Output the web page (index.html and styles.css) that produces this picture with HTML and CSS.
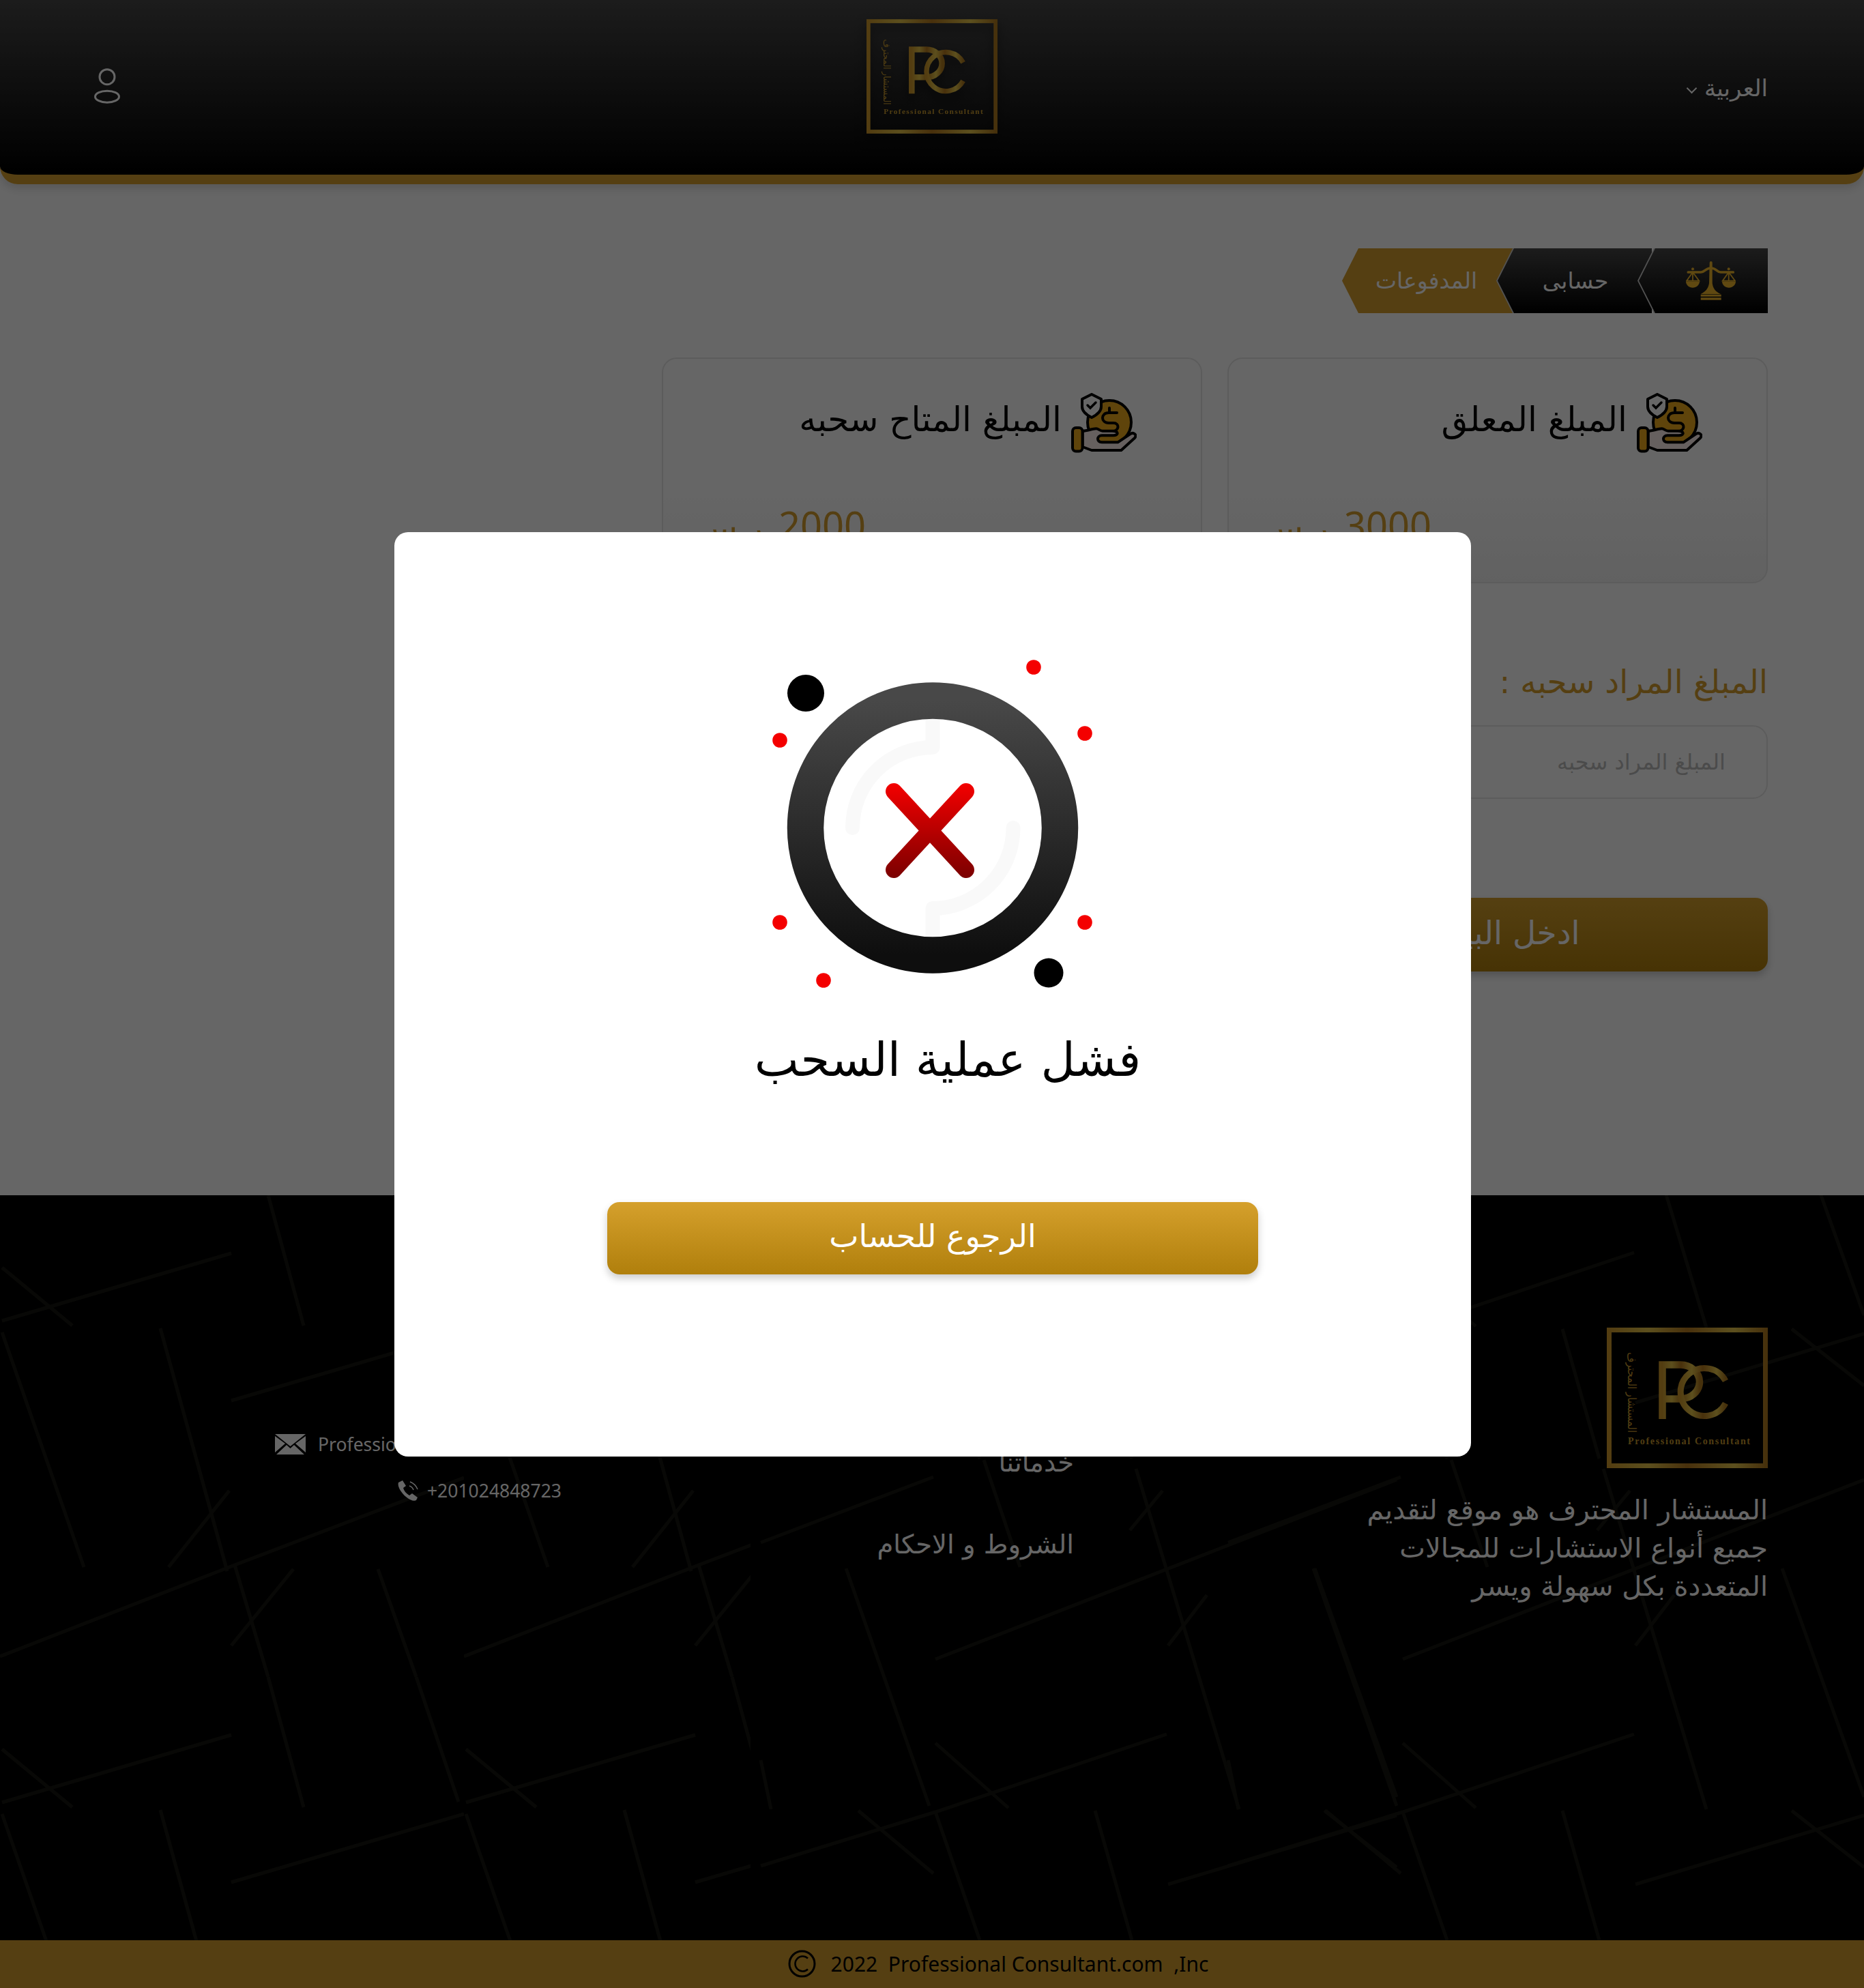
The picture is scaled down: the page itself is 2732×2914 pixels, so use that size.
FILE: index.html
```html
<!DOCTYPE html>
<html lang="ar" dir="rtl">
<head>
  <meta charset="UTF-8">
  <meta name="viewport" content="width=device-width, initial-scale=1.0">
  <title>المدفوعات</title>
  <link rel="stylesheet" href="styles.css">
</head>
<body>
  <svg class="defs" aria-hidden="true">
    <defs>
      <linearGradient id="goldFrame" x1="0" y1="0" x2="1" y2="0">
        <stop offset="0" stop-color="#cf9a2c"/>
        <stop offset=".25" stop-color="#e6c54a"/>
        <stop offset=".5" stop-color="#b5791f"/>
        <stop offset=".8" stop-color="#e8c84c"/>
        <stop offset="1" stop-color="#b07a20"/>
      </linearGradient>
      <symbol id="logo" viewBox="0 0 236 206">
        <rect x="3.500" y="3.500" width="229" height="199" fill="none" stroke="url(#goldFrame)" stroke-width="7"/>
        <path d="M81.500 134V54.500H108A28 25 0 0 1 108 104.500H84" fill="none" stroke="url(#goldFrame)" stroke-width="10.500"/>
        <path d="M174 78A35 35 0 1 0 174 111" fill="none" stroke="url(#goldFrame)" stroke-width="9"/>
        <text x="31" y="171" class="logo-en" textLength="179" direction="ltr">Professional Consultant</text>
        <text transform="translate(31 154) rotate(90)" class="logo-ar" textLength="118" lengthAdjust="spacingAndGlyphs" direction="rtl">المستشار المحترف</text>
      </symbol>
      <symbol id="moneyHand" viewBox="0 0 96 88">
        <circle cx="56" cy="43" r="32" fill="#eeaa1c" stroke="#000" stroke-width="4"/>
        <path d="M67 29H55C43 29 43 44 55 44H62C71 44 71 56 60 56M56 22V29" fill="none" stroke="#000" stroke-width="4" stroke-linecap="round"/>
        <path d="M30 2L44 9V20C44 28 36 33 30 36C24 33 16 28 16 20V9Z" fill="#fff" stroke="#000" stroke-width="4" stroke-linejoin="round"/>
        <path d="M24 18L28 22L36 14" fill="none" stroke="#000" stroke-width="3.500" stroke-linecap="round"/>
        <path d="M16.700 55.700C24 55.700 30 52.300 36.700 52.300C40 52.300 42 55.700 46 55.700H60C70 55.700 70 62.300 61.700 62.300H45C37 62.300 37 72.300 45 72.300H68.300L86.700 60C91 57 97 61 93.300 65.700L73.300 84H30L16.700 79Z" fill="#fff0ee" stroke="#000" stroke-width="4" stroke-linejoin="round"/>
        <rect x="2" y="51" width="14.500" height="34.500" rx="5" fill="#eeaa1c" stroke="#000" stroke-width="4"/>
      </symbol>
    </defs>
  </svg>

  <header class="site-header">
    <a class="lang" href="#">العربية <span class="lang-arrow"></span></a>
    <svg class="logo-top"><use href="#logo"/></svg>
    <svg class="user-icon" viewBox="0 0 38 52">
      <circle cx="19" cy="12.700" r="11" fill="none" stroke="#fff" stroke-width="3"/>
      <ellipse cx="19" cy="41.700" rx="17.500" ry="8.500" fill="none" stroke="#fff" stroke-width="3"/>
    </svg>
  </header>

  <main class="content">
    <nav class="crumbs">
      <a class="crumb crumb-home" href="#">
        <svg class="scale-icon" viewBox="0 0 73 57">
          <g fill="#efb62c">
            <path d="M34.700 2A2 2 0 0 1 38.700 2L38.700 32C39.500 40 44 45 51 48H21.700C28 45 33 40 34 32Z"/>
            <rect x="21.700" y="48.700" width="30" height="3"/>
            <rect x="21.700" y="53.300" width="30" height="3.400"/>
            <circle cx="10" cy="11.300" r="2"/>
            <circle cx="62.700" cy="11.300" r="2"/>
            <path d="M0 29.500H20C20 35 15 38.700 10 38.700C5 38.700 0 35 0 29.500ZM53 29.500H73C73 35 68 38.700 63 38.700C58 38.700 53 35 53 29.500Z"/>
          </g>
          <path d="M3.300 16H22C28 16 28 10 36.700 10C45 10 45 16 51 16H69.300" fill="none" stroke="#efb62c" stroke-width="3.700" stroke-linecap="round"/>
          <path d="M10 16L1 28.700H19.300ZM10 16V28.700M62.700 16L53.700 28.700H72ZM62.700 16V28.700" fill="none" stroke="#efb62c" stroke-width="1.800"/>
        </svg>
      </a>
      <a class="crumb crumb-account" href="#"><span>حسابى</span></a>
      <a class="crumb crumb-active" href="#"><span>المدفوعات</span></a>
    </nav>

    <section class="cards">
      <div class="card">
        <div class="card-title">
          <svg class="card-icon"><use href="#moneyHand"/></svg>
          <h3>المبلغ المعلق</h3>
        </div>
        <p class="amount">3000 <span class="currency">ر.س</span></p>
      </div>
      <div class="card">
        <div class="card-title">
          <svg class="card-icon"><use href="#moneyHand"/></svg>
          <h3>المبلغ المتاح سحبه</h3>
        </div>
        <p class="amount">2000 <span class="currency">ر.س</span></p>
      </div>
    </section>

    <form class="withdraw">
      <label for="amount">المبلغ المراد سحبه :</label>
      <input type="text" id="amount" placeholder="المبلغ المراد سحبه">
      <button type="button" class="btn-gold">ادخل البيانات</button>
    </form>
  </main>

  <footer class="site-footer">
    <svg class="footer-lines" aria-hidden="true">
      <defs>
        <pattern id="lines" width="680" height="706" patternUnits="userSpaceOnUse">
          <g fill="none" stroke="#16160f" stroke-width="5">
            <path d="M3 184L339 85M3 106L106 191M393 0L445 191M3 201L123 545M235 195L333 551"/>
            <path d="M339 301L680 201M247 545L336 433M0 676L344 542L680 414M344 542L393 706"/>
            <path d="M339 660L430 548M554 548L610 706M610 0L672 183"/>
          </g>
        </pattern>
        <g id="rightLines" fill="none" stroke="#16160f" stroke-width="5">
          <path d="M1800 509L2053 413M2127 388L2180 545M2350 401L2501 900M1925 547L2047 895M2056 904L2121 1092"/>
          <path d="M2056 680L2732 417M2397 660L2454 586M2389 433L2341 491M2612 547L2732 882M1800 828L1815 900"/>
          <path d="M2056 803L2163 898M1800 983L2056 904L2395 790M1943 902L2053 994M2290 902L2344 1092M2397 1010L2732 909M2626 902L2732 985"/>
        </g>
      </defs>
      <rect width="1100" height="100%" fill="url(#lines)"/>
      <use href="#rightLines"/>
      <use href="#rightLines" y="-706"/>
      <use href="#rightLines" x="-685"/>
      <use href="#rightLines" x="-685" y="-706"/>
    </svg>
    <div class="footer-main">
      <div class="footer-about">
        <svg class="logo-bottom"><use href="#logo"/></svg>
        <p>المستشار المحترف هو موقع لتقديم جميع أنواع الاستشارات للمجالات المتعددة بكل سهولة ويسر</p>
      </div>
      <ul class="footer-links">
        <li><a href="#">خدماتنا</a></li>
        <li><a href="#">الشروط و الاحكام</a></li>
      </ul>
      <div class="footer-contact">
        <a class="contact-row" dir="ltr" href="#">
          <svg class="mail-icon" viewBox="0 0 45 30">
            <path d="M0 0H45L22.500 18ZM0 3V27L15 14ZM45 3V27L30 14ZM2 30L17 16L22.500 21L28 16L43 30Z" fill="#fff"/>
          </svg>
          <span>Professional@pcconsult.com</span>
        </a>
        <a class="contact-row" dir="ltr" href="#">
          <svg class="phone-icon" viewBox="0 0 30 30">
            <path d="M1 3L7 0L12 8L8 11C9 15 12 19 17 22L21 19L29 25L27 29C24 31 18 29 12 24C5 18 -1 9 1 3Z" fill="#fff"/>
            <path d="M18 2C23 4 27 8 29 13M17 8C20 9 22 11 23 14" fill="none" stroke="#fff" stroke-width="1.500"/>
          </svg>
          <span>+201024848723</span>
        </a>
      </div>
    </div>
    <div class="copyright" dir="ltr">
      <svg class="copy-icon" viewBox="0 0 41 41">
        <circle cx="20.500" cy="20.500" r="18.500" fill="none" stroke="#000" stroke-width="3"/>
        <path d="M29 12.500A11 11 0 1 0 29 28.500" fill="none" stroke="#000" stroke-width="2.500"/>
      </svg>
      <span>2022&nbsp; Professional Consultant.com &nbsp;,Inc</span>
    </div>
  </footer>

  <div class="overlay">
    <div class="modal">
      <svg class="fail-art" viewBox="0 0 560 560">
        <defs>
          <linearGradient id="ringGrad" x1="0" y1="0" x2="0" y2="1">
            <stop offset="0" stop-color="#484848"/>
            <stop offset="1" stop-color="#0e0e0e"/>
          </linearGradient>
          <linearGradient id="crossGrad" gradientUnits="userSpaceOnUse" x1="0" y1="208" x2="0" y2="348">
            <stop offset="0" stop-color="#f40000"/>
            <stop offset="1" stop-color="#7a0000"/>
          </linearGradient>
        </defs>
        <g fill="none" stroke="#f9f9f9" stroke-width="21" stroke-linecap="round" stroke-linejoin="round">
          <path d="M168.500 273.500A117.500 118 0 0 1 286 155.500V110"/>
          <path d="M404 273.500A118 118 0 0 1 286 391.500V438"/>
        </g>
        <circle cx="286" cy="273.500" r="186.500" fill="none" stroke="url(#ringGrad)" stroke-width="53.500"/>
        <path d="M229 220L335 335M335 220L229 335" fill="none" stroke="url(#crossGrad)" stroke-width="24" stroke-linecap="round"/>
        <circle cx="100" cy="76" r="27"/>
        <circle cx="456" cy="486" r="21.500"/>
        <g fill="#f40000">
          <circle cx="434" cy="38" r="10.800"/>
          <circle cx="509" cy="135" r="10.800"/>
          <circle cx="62" cy="145" r="10.800"/>
          <circle cx="62" cy="412" r="10.800"/>
          <circle cx="509" cy="412" r="10.800"/>
          <circle cx="126" cy="497" r="10.800"/>
        </g>
      </svg>
      <h2>فشل عملية السحب</h2>
      <button type="button" class="btn-gold btn-back">الرجوع للحساب</button>
    </div>
  </div>
</body>
</html>
```

FILE: styles.css
```css
*{
  box-sizing: border-box;
}
body{
  margin: 0;
  font-family: "DejaVu Sans", sans-serif;
  background-color: #fff;
  color: #000;
}
a{
  color: inherit;
  text-decoration: none;
}
.defs{
  position: absolute;
  width: 0;
  height: 0;
}
.logo-en{
  font-family: "Liberation Serif", serif;
  font-weight: bold;
  font-size: 14px;
  fill: #c99a2e;
}
.logo-ar{
  font-family: "DejaVu Sans", sans-serif;
  font-size: 17px;
  fill: #c99a2e;
}

/* header */
.site-header{
  height: 270px;
  padding: 28px 140px 0;
  display: grid;
  grid-template-columns: 1fr auto 1fr;
  align-items: start;
  background: linear-gradient(#474747, #000);
  border-bottom: 14px solid #d49d2f;
  border-radius: 0 0 26px 26px;
  box-shadow: 0 6px 14px rgba(0,0,0,.15);
}
.lang{
  margin: 79px 1px 0 0;
  color: #fff;
  font-size: 34px;
  line-height: 44px;
}
.lang-arrow{
  display: inline-block;
  width: 11px;
  height: 11px;
  margin: 0 2px 6px;
  border-left: 2px solid #fff;
  border-bottom: 2px solid #fff;
  transform: rotate(-45deg);
}
.logo-top{
  width: 192px;
  height: 168px;
  filter: drop-shadow(0 8px 8px rgba(0,0,0,.5));
}
.user-icon{
  width: 38px;
  height: 52px;
  margin: 72px 0 0 -2px;
  justify-self: end;
}

/* content */
.content{
  padding: 94px 141px 328px;
}
.crumbs{
  display: flex;
  height: 95px;
}
.crumb{
  position: relative;
  display: flex;
  align-items: center;
  justify-content: center;
  height: 100%;
  color: #fff;
  font-size: 33px;
  background-color: #ccc;
  clip-path: polygon(100% 0, 100% 100%, 24px 100%, 0 50%, 24px 0);
}
.crumb::before{
  content: "";
  position: absolute;
  top: 0;
  bottom: 0;
  right: 0;
  left: 2px;
  background: linear-gradient(#474747, #000);
  clip-path: polygon(100% 0, 100% 100%, 24px 100%, 0 50%, 24px 0);
}
.crumb span, .crumb svg{
  position: relative;
}
.crumb-home{
  width: 191px;
  padding-left: 24px;
  z-index: 3;
}
.crumb-account{
  width: 228px;
  margin-right: -21px;
  padding-left: 4px;
  z-index: 2;
}
.crumb-active{
  width: 252px;
  margin-right: -26px;
  padding-right: 5px;
  z-index: 1;
  background-color: #d49d2f;
}
.crumb-active::before{
  background: #d49d2f;
}
.scale-icon{
  width: 73px;
  height: 57px;
}
.cards{
  display: flex;
  gap: 37px;
  margin-top: 65px;
}
.card{
  width: 792px;
  height: 331px;
  padding: 50px 94px 0 48px;
  border: 2px solid #e6e6e6;
  border-radius: 22px;
  background: linear-gradient(#fff 58%, #f3f3f3);
}
.card-title{
  display: flex;
  align-items: center;
  gap: 14px;
}
.card-title h3{
  margin: 0 0 10px;
  font-size: 50px;
  font-weight: 400;
}
.card-icon{
  width: 96px;
  height: 88px;
}
.amount{
  margin: 66px 0 0;
  text-align: left;
  color: #d49d2f;
  font-family: "Noto Sans", sans-serif;
  font-size: 56px;
  line-height: 78px;
  word-spacing: 8px;
}
.currency{
  font-size: 50px;
}
.withdraw{
  width: 874px;
  margin-top: 118px;
  display: flex;
  flex-direction: column;
}
.withdraw label{
  color: #d49d2f;
  font-size: 47px;
  line-height: 54px;
}
.withdraw input{
  height: 108px;
  margin-top: 36px;
  padding: 0 60px;
  border: 2px solid #e6e6e6;
  border-radius: 22px;
  outline: none;
  font-family: inherit;
  font-size: 32px;
  background-color: #fff;
}
.withdraw input::placeholder{
  color: #bbb;
}
.btn-gold{
  height: 108px;
  padding: 0 0 6px;
  border: none;
  border-radius: 18px;
  color: #fff;
  font-family: inherit;
  font-size: 46px;
  background: linear-gradient(#d5a02c, #b07f0c);
  box-shadow: 0 6px 12px rgba(0,0,0,.2);
}
.withdraw .btn-gold{
  margin-top: 145px;
  padding-left: 68px;
  font-size: 47px;
}

/* footer */
.site-footer{
  position: relative;
  background-color: #000;
  color: #fff;
}
.footer-lines{
  position: absolute;
  top: 0;
  left: 0;
  width: 100%;
  height: 100%;
}
.footer-main{
  position: relative;
  height: 1092px;
  padding: 194px 141px 0;
  display: flex;
}
.footer-about{
  width: 1017px;
}
.logo-bottom{
  display: block;
  width: 236px;
  height: 206px;
}
.footer-about p{
  width: 640px;
  margin: 33px 0 0;
  font-size: 40px;
  line-height: 56px;
}
.footer-links{
  width: 751px;
  margin: 0;
  padding: 168px 0 0;
  list-style: none;
  font-size: 38.500px;
}
.footer-links li{
  height: 120px;
  line-height: 60px;
}
.footer-contact{
  display: flex;
  flex-direction: column;
  align-items: flex-start;
  gap: 28px;
  padding-top: 151px;
  font-family: "Noto Sans", sans-serif;
  font-size: 26.500px;
}
.contact-row{
  display: flex;
  align-items: center;
  height: 40px;
  gap: 18px;
}
.mail-icon{
  width: 45px;
  height: 30px;
}
.phone-icon{
  width: 30px;
  height: 30px;
  margin-right: -5px;
}
.copyright{
  position: relative;
  height: 70px;
  padding: 0 0 2px 194px;
  display: flex;
  align-items: center;
  justify-content: center;
  gap: 22px;
  color: #000;
  font-family: "Noto Sans", sans-serif;
  font-size: 30px;
  background-color: #d49d2f;
}
.copy-icon{
  width: 41px;
  height: 41px;
}

/* failed popup */
.overlay{
  position: fixed;
  top: 0;
  left: 0;
  z-index: 10;
  width: 100%;
  height: 100%;
  padding: 1px 0 0 2px;
  display: flex;
  align-items: center;
  justify-content: center;
  background-color: rgba(0,0,0,.6);
}
.modal{
  width: 1578px;
  height: 1355px;
  padding-top: 160px;
  display: flex;
  flex-direction: column;
  align-items: center;
  background-color: #fff;
  border-radius: 20px;
}
.fail-art{
  flex: none;
  width: 560px;
  height: 560px;
  margin-right: 12px;
}
.modal h2{
  margin: 13px 0 0;
  font-size: 69px;
  font-weight: 400;
  line-height: 80px;
  transform: translateX(22px);
}
.btn-back{
  flex: none;
  width: 954px;
  height: 106px;
  margin-top: 169px;
}
```
